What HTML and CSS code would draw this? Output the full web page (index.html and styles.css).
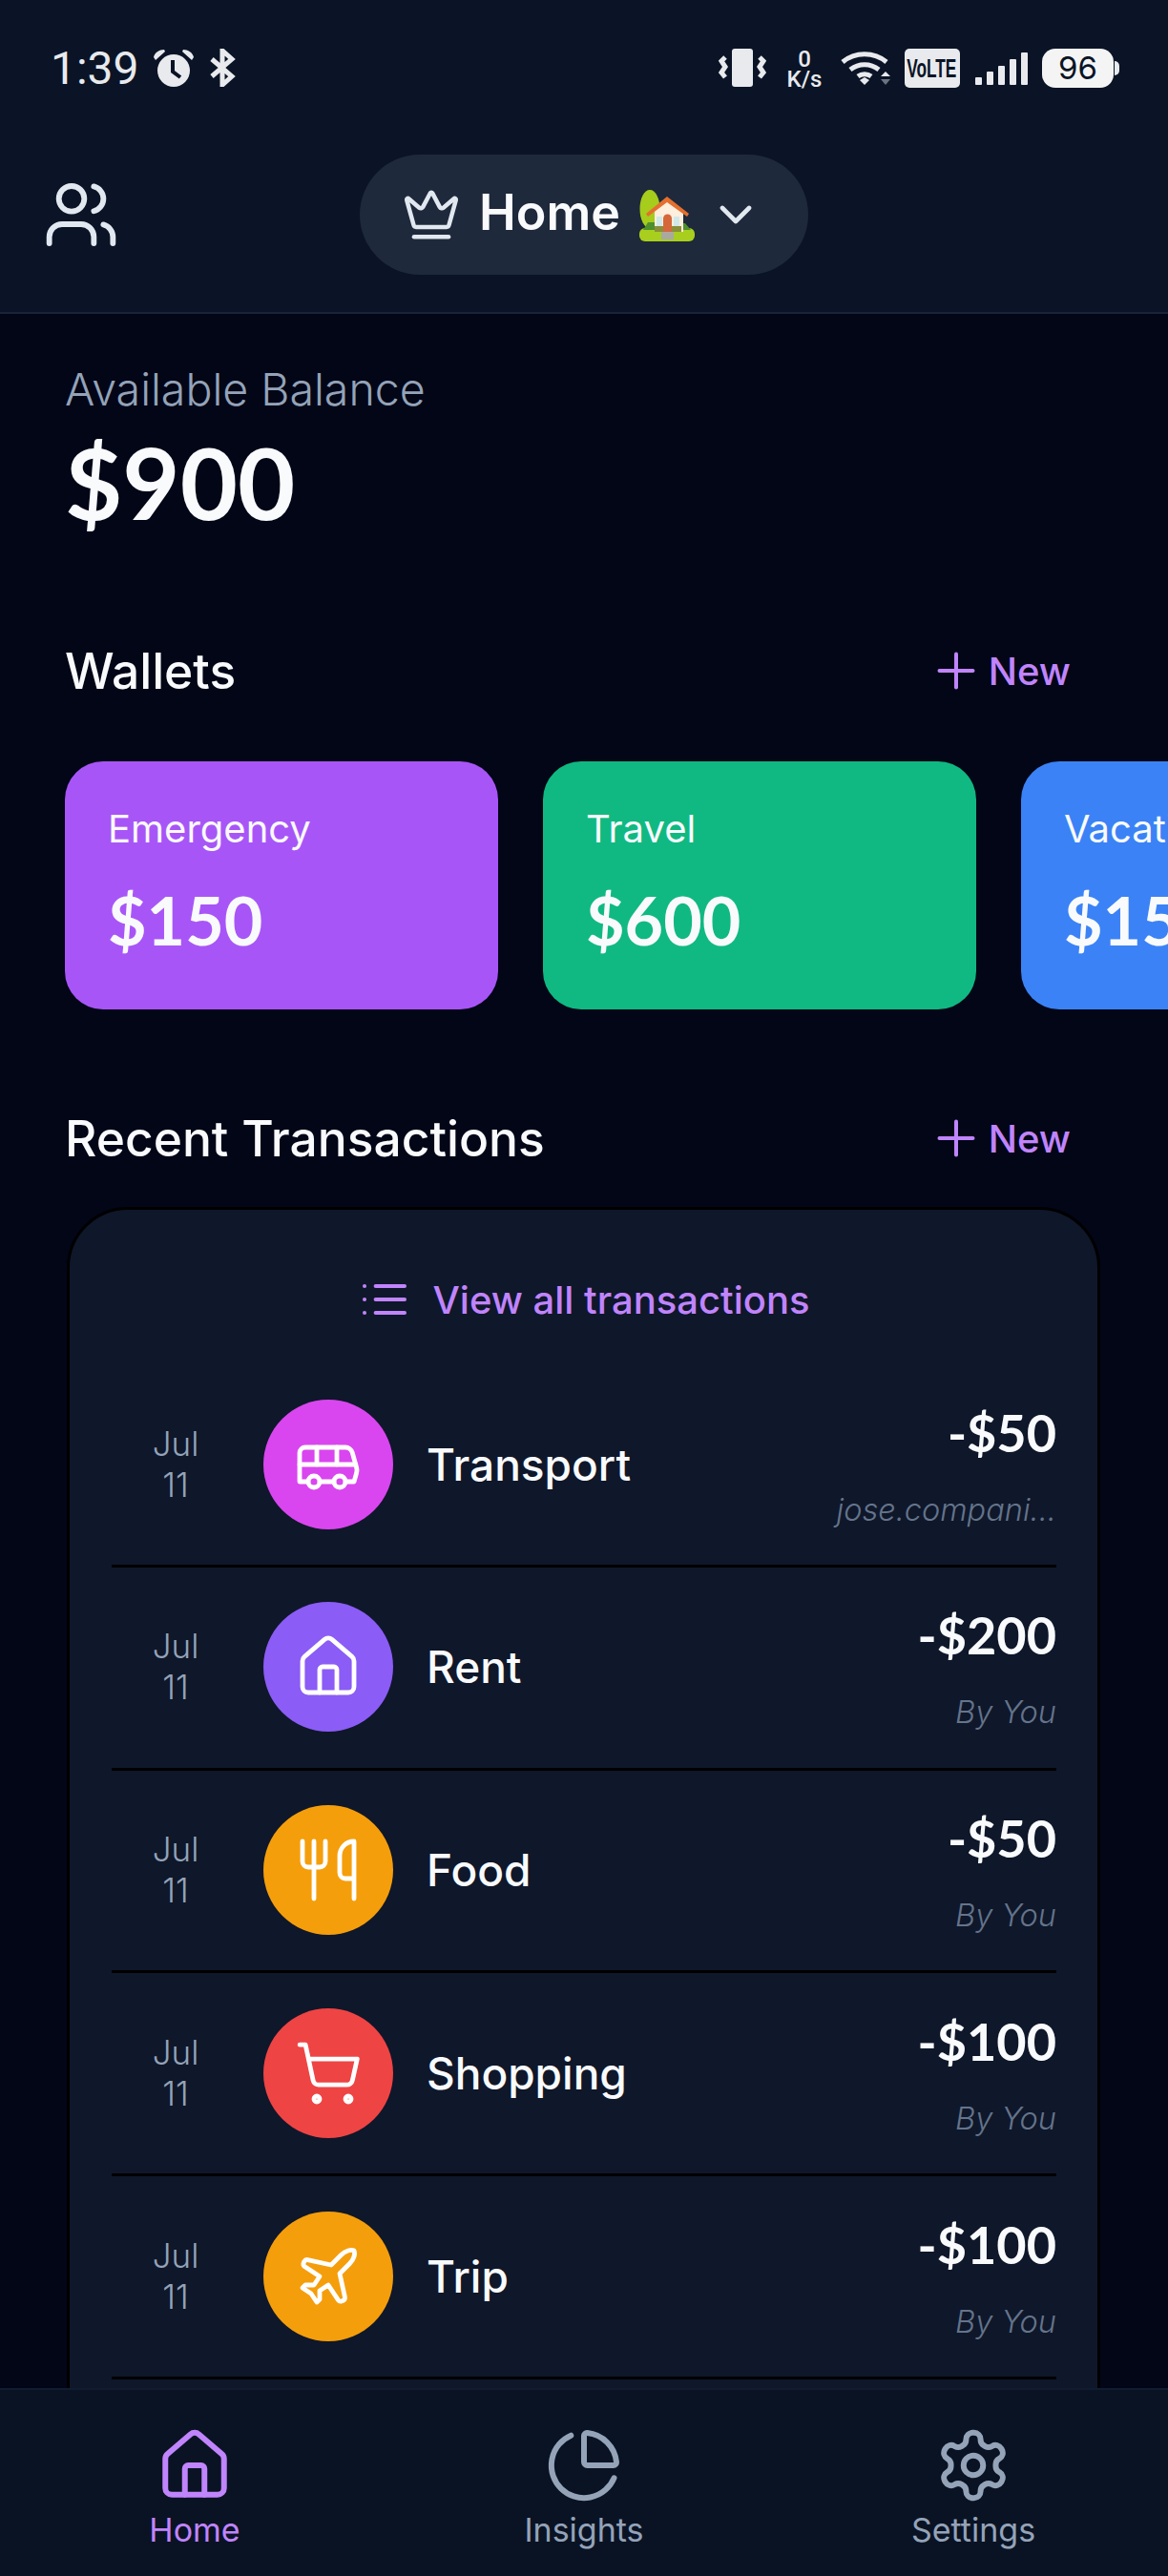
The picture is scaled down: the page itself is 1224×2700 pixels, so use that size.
FILE: index.html
```html
<!DOCTYPE html>
<html lang="en">

<head>
  <meta charset="UTF-8">
  <meta name="viewport" content="width=device-width, initial-scale=1.0">
  <title>Home | Wallets</title>
  <link rel="stylesheet" href="styles.css">
</head>

<body>
  <div class="app">
    <header class="topbar">
      <!--Phone status bar-->
      <div class="status">
        <div class="status-left">
          <span class="clock">1:39</span>
          <svg class="st-alarm" viewBox="0 0 44 40"><path class="fill" d="M22 6a17 17 0 1 0 0 34 17 17 0 0 0 0-34z"/><path class="fill" d="M1 9c1-5 6-8 11-8l1 2-10 9zM43 9c-1-5-6-8-11-8l-1 2 10 9z"/><path class="dark" d="M21 12v12l8 6"/></svg>
          <svg class="st-bt" viewBox="0 0 30 40"><path class="line" d="M4 11l21 18-10 9V2l10 9L4 29"/></svg>
        </div>
        <div class="status-right">
          <svg class="st-vib" viewBox="0 0 50 40"><rect class="fill" x="14" y="0" width="22" height="40" rx="3"/><path class="line" d="M7 9l-4 4 4 6-4 6 4 5M43 9l4 4-4 6 4 6-4 5"/></svg>
          <div class="netspeed"><span>0</span><span>K/s</span></div>
          <svg class="st-wifi" viewBox="0 0 56 40"><path class="line" d="M3 14c13-11 33-11 46 0M11 22c9-7 21-7 30 0M19 29c4-3 10-3 14 0"/><path class="fill" d="M21 33l5-3 5 3-5 5z"/><path class="fill" d="M43 29l5-5 5 5z"/><path class="dim" d="M43 32h10l-5 6z"/></svg>
          <div class="volte"><span>VoLTE</span></div>
          <div class="bars"><i class="b1"></i><i class="b2"></i><i class="b3"></i><i class="b4"></i><i class="b5"></i></div>
          <div class="battery"><span class="battery-level">96</span><i class="battery-nub"></i></div>
        </div>
      </div>

      <div class="appbar">
        <svg class="ic ic-users" viewBox="0 0 24 24"><path d="M16 21v-2a4 4 0 0 0-4-4H6a4 4 0 0 0-4 4v2"/><circle cx="9" cy="7" r="4"/><path d="M22 21v-2a4 4 0 0 0-3-3.87"/><path d="M16 3.13a4 4 0 0 1 0 7.75"/></svg>
        <div class="pill">
          <svg class="ic ic-crown" viewBox="0 0 24 24"><path d="M11.562 3.266a.5.5 0 0 1 .876 0L15.39 8.87a1 1 0 0 0 1.516.294L21.183 5.5a.5.5 0 0 1 .798.519l-2.834 10.246a1 1 0 0 1-.956.734H5.81a1 1 0 0 1-.957-.734L2.02 6.02a.5.5 0 0 1 .798-.519l4.276 3.664a1 1 0 0 0 1.516-.294z"/><path d="M5 21h14"/></svg>
          <span class="pill-name">Home</span>
          <!--house with garden emoji-->
          <svg class="pill-emoji" viewBox="0 0 58 54">
            <ellipse cx="11" cy="20" rx="10.5" ry="20" fill="#a6cc1c"/>
            <rect x="0" y="40" width="58" height="14" rx="6" fill="#a8cf1e"/>
            <path d="M4 42l5-8h8v8zM54 42l-6-7h-8v7z" fill="#4f8f2c"/>
            <path d="M16 21L29 10l13 11 4 2v21H16z" fill="#fdeedd"/>
            <path d="M7 25L29 7l23 18-2 3L29 13 9 28z" fill="#e46f30"/>
            <path d="M25 44V30a4.5 4.5 0 0 1 9 0v14z" fill="#d5683a"/>
            <rect x="18" y="28" width="6" height="10" fill="#cfe8ea"/>
            <rect x="36" y="28" width="6" height="10" fill="#cfe8ea"/>
            <rect x="16" y="38" width="9" height="6" fill="#8a8f3a"/>
            <rect x="34" y="38" width="10" height="6" fill="#8a8f3a"/>
            <rect x="23" y="44" width="13" height="8" fill="#a9a99f"/>
          </svg>
          <svg class="ic ic-chevron" viewBox="0 0 24 24"><path d="m6 9 6 6 6-6"/></svg>
        </div>
        <div class="appbar-end"></div>
      </div>
    </header>

    <main class="content">
      <section class="balance">
        <p class="balance-label">Available Balance</p>
        <p class="balance-value">$900</p>
      </section>

      <section class="section-head head-wallets">
        <h2>Wallets</h2>
        <a class="new-link"><svg class="ic ic-plus" viewBox="0 0 24 24"><path d="M5 12h14"/><path d="M12 5v14"/></svg>New</a>
      </section>

      <section class="wallets">
        <div class="wallet wallet-purple"><span class="wallet-name">Emergency</span><span class="wallet-amount">$150</span></div>
        <div class="wallet wallet-green"><span class="wallet-name">Travel</span><span class="wallet-amount">$600</span></div>
        <div class="wallet wallet-blue"><span class="wallet-name">Vacation</span><span class="wallet-amount">$150</span></div>
      </section>

      <section class="section-head head-recent">
        <h2>Recent Transactions</h2>
        <a class="new-link"><svg class="ic ic-plus" viewBox="0 0 24 24"><path d="M5 12h14"/><path d="M12 5v14"/></svg>New</a>
      </section>

      <section class="tx-card">
        <a class="view-all"><svg class="ic ic-list" viewBox="0 0 24 24"><path d="M3 12h.01"/><path d="M3 18h.01"/><path d="M3 6h.01"/><path d="M8 12h13"/><path d="M8 18h13"/><path d="M8 6h13"/></svg>View all transactions</a>

        <div class="tx">
          <div class="tx-date"><span>Jul</span><span>11</span></div>
          <div class="tx-icon tx-pink"><svg class="ic" viewBox="0 0 24 24"><path d="M8 6v6"/><path d="M15 6v6"/><path d="M2 12h19.6"/><path d="M18 18h3s.5-1.7.8-2.8c.1-.4.2-.8.2-1.2 0-.4-.1-.8-.2-1.2l-1.4-5C20.1 6.8 19.1 6 18 6H4a2 2 0 0 0-2 2v10h3"/><circle cx="7" cy="18" r="2"/><path d="M9 18h5"/><circle cx="16" cy="18" r="2"/></svg></div>
          <span class="tx-name">Transport</span>
          <div class="tx-right"><span class="tx-amount">-$50</span><span class="tx-by">jose.compani...</span></div>
        </div>

        <div class="tx">
          <div class="tx-date"><span>Jul</span><span>11</span></div>
          <div class="tx-icon tx-violet"><svg class="ic" viewBox="0 0 24 24"><path d="M15 21v-8a1 1 0 0 0-1-1h-4a1 1 0 0 0-1 1v8"/><path d="M3 10a2 2 0 0 1 .709-1.528l7-5.999a2 2 0 0 1 2.582 0l7 5.999A2 2 0 0 1 21 10v9a2 2 0 0 1-2 2H5a2 2 0 0 1-2-2z"/></svg></div>
          <span class="tx-name">Rent</span>
          <div class="tx-right"><span class="tx-amount">-$200</span><span class="tx-by">By You</span></div>
        </div>

        <div class="tx">
          <div class="tx-date"><span>Jul</span><span>11</span></div>
          <div class="tx-icon tx-amber"><svg class="ic" viewBox="0 0 24 24"><path d="M3 2v7c0 1.1.9 2 2 2h4a2 2 0 0 0 2-2V2"/><path d="M7 2v20"/><path d="M21 15V2a5 5 0 0 0-5 5v6c0 1.1.9 2 2 2h3Zm0 0v7"/></svg></div>
          <span class="tx-name">Food</span>
          <div class="tx-right"><span class="tx-amount">-$50</span><span class="tx-by">By You</span></div>
        </div>

        <div class="tx">
          <div class="tx-date"><span>Jul</span><span>11</span></div>
          <div class="tx-icon tx-red"><svg class="ic" viewBox="0 0 24 24"><circle cx="8" cy="21" r="1"/><circle cx="19" cy="21" r="1"/><path d="M2.05 2.05h2l2.66 12.42a2 2 0 0 0 2 1.58h9.78a2 2 0 0 0 1.95-1.57l1.65-7.43H5.12"/></svg></div>
          <span class="tx-name">Shopping</span>
          <div class="tx-right"><span class="tx-amount">-$100</span><span class="tx-by">By You</span></div>
        </div>

        <div class="tx">
          <div class="tx-date"><span>Jul</span><span>11</span></div>
          <div class="tx-icon tx-amber"><svg class="ic" viewBox="0 0 24 24"><path d="M17.8 19.2 16 11l3.5-3.5C21 6 21.5 4 21 3c-1-.5-3 0-4.5 1.5L13 8 4.8 6.2c-.5-.1-.9.1-1.1.5l-.3.5c-.2.5-.1 1 .3 1.3L9 12l-2 3H4l-1 1 3 2 2 3 1-1v-3l3-2 3.5 5.3c.3.4.8.5 1.3.3l.5-.2c.4-.3.6-.7.5-1.2z"/></svg></div>
          <span class="tx-name">Trip</span>
          <div class="tx-right"><span class="tx-amount">-$100</span><span class="tx-by">By You</span></div>
        </div>
      </section>
    </main>

    <nav class="tabs">
      <a class="tab tab-active">
        <svg class="ic" viewBox="0 0 24 24"><path d="M15 21v-8a1 1 0 0 0-1-1h-4a1 1 0 0 0-1 1v8"/><path d="M3 10a2 2 0 0 1 .709-1.528l7-5.999a2 2 0 0 1 2.582 0l7 5.999A2 2 0 0 1 21 10v9a2 2 0 0 1-2 2H5a2 2 0 0 1-2-2z"/></svg>
        <span>Home</span>
      </a>
      <a class="tab">
        <svg class="ic" viewBox="0 0 24 24"><path d="M21 12c.552 0 1.005-.449.95-.998a10 10 0 0 0-8.953-8.951c-.55-.055-.998.398-.998.95v8a1 1 0 0 0 1 1z"/><path d="M21.21 15.89A10 10 0 1 1 8 2.83"/></svg>
        <span>Insights</span>
      </a>
      <a class="tab">
        <svg class="ic" viewBox="0 0 24 24"><path d="M12.22 2h-.44a2 2 0 0 0-2 2v.18a2 2 0 0 1-1 1.73l-.43.25a2 2 0 0 1-2 0l-.15-.08a2 2 0 0 0-2.73.73l-.22.38a2 2 0 0 0 .73 2.73l.15.1a2 2 0 0 1 1 1.72v.51a2 2 0 0 1-1 1.74l-.15.09a2 2 0 0 0-.73 2.73l.22.38a2 2 0 0 0 2.73.73l.15-.08a2 2 0 0 1 2 0l.43.25a2 2 0 0 1 1 1.73V20a2 2 0 0 0 2 2h.44a2 2 0 0 0 2-2v-.18a2 2 0 0 1 1-1.73l.43-.25a2 2 0 0 1 2 0l.15.08a2 2 0 0 0 2.73-.73l.22-.39a2 2 0 0 0-.73-2.73l-.15-.08a2 2 0 0 1-1-1.74v-.5a2 2 0 0 1 1-1.74l.15-.09a2 2 0 0 0 .73-2.73l-.22-.38a2 2 0 0 0-2.73-.73l-.15.08a2 2 0 0 1-2 0l-.43-.25a2 2 0 0 1-1-1.73V4a2 2 0 0 0-2-2z"/><circle cx="12" cy="12" r="3"/></svg>
        <span>Settings</span>
      </a>
    </nav>
  </div>
</body>

</html>
```

FILE: styles.css
```css
* {
  box-sizing: border-box;
}

html,
body {
  height: 100%;
}

body {
  margin: 0;
  font-family: Inter, "Noto Sans", sans-serif;
  background-color: #020617;
  color: #f8fafc;
}

p,
h2 {
  margin: 0;
}

.app {
  height: 2700px;
  display: flex;
  flex-direction: column;
  overflow: hidden;
}

/* shared line icon */
.ic {
  fill: none;
  stroke: currentColor;
  stroke-width: 1.5;
  stroke-linecap: round;
  stroke-linejoin: round;
  flex: none;
  display: block;
}

/* top */
.topbar {
  flex: none;
  height: 329px;
  background-color: #0a1426;
  border-bottom: 2px solid #19233a;
}

.status {
  height: 142px;
  padding: 50px 51px 0 53px;
  display: flex;
  justify-content: space-between;
  align-items: flex-start;
  color: #e8eaed;
}

.status-left,
.status-right {
  display: flex;
  align-items: center;
  height: 42px;
}

.clock {
  font-family: Roboto, sans-serif;
  font-size: 48px;
  width: 107px;
}

.status .fill {
  fill: #e8eaed;
}

.status .dim {
  fill: #6b7280;
}

.status .line {
  fill: none;
  stroke: #e8eaed;
  stroke-width: 5;
}

.status .dark {
  fill: none;
  stroke: #0a1426;
  stroke-width: 4;
}

.st-alarm {
  width: 44px;
  height: 40px;
}

.st-bt {
  width: 30px;
  height: 40px;
  margin-left: 14px;
}

.st-vib {
  width: 50px;
  height: 40px;
}

.netspeed {
  display: flex;
  flex-direction: column;
  align-items: center;
  width: 43px;
  margin-left: 19px;
  padding-top: 4px;
  font-family: Roboto, sans-serif;
  font-size: 24px;
  font-weight: 500;
  line-height: 21px;
}

.st-wifi {
  width: 56px;
  height: 40px;
  margin-left: 15px;
}

.volte {
  width: 58px;
  height: 41px;
  margin-left: 12px;
  border-radius: 5px;
  background-color: #e8eaed;
  color: #0a1426;
  font-family: "Liberation Sans", sans-serif;
  font-size: 24px;
  font-weight: 700;
  line-height: 41px;
  text-align: center;
}

.volte span {
  display: inline-block;
  transform: scale(0.72, 1.15);
  transform-origin: center;
  margin: 0 -10px;
}

.bars {
  display: flex;
  align-items: flex-end;
  gap: 4.5px;
  height: 36px;
  margin-left: 16px;
}

.bars i {
  width: 7.5px;
  background-color: #e8eaed;
  border-radius: 1px;
}

.b1 {
  height: 8px;
}

.b2 {
  height: 14px;
}

.b3 {
  height: 20px;
}

.b4 {
  height: 27px;
}

.b5 {
  height: 34px;
}

.battery {
  display: flex;
  align-items: center;
  margin-left: 15px;
}

.battery-level {
  width: 75px;
  height: 41px;
  border-radius: 14px;
  background-color: #f4f4f5;
  color: #0a1426;
  font-size: 33px;
  line-height: 41px;
  text-align: center;
}

.battery-nub {
  width: 5px;
  height: 15px;
  margin-left: 1px;
  background-color: #e8eaed;
  border-radius: 0 7px 7px 0;
}

.appbar {
  display: grid;
  grid-template-columns: 1fr auto 1fr;
  align-items: center;
  padding: 20px 48px 0;
}

.ic-users {
  width: 80px;
  height: 80px;
  color: #e2e8f0;
  stroke-width: 1.75;
  margin-left: -3px;
}

.pill {
  width: 470px;
  height: 126px;
  border-radius: 63px;
  background-color: #1e293b;
  display: flex;
  align-items: center;
  padding-left: 44px;
}

.ic-crown {
  width: 62px;
  height: 62px;
  color: #e2e8f0;
  stroke-width: 1.75;
  margin-right: 19px;
}

.pill-name {
  font-size: 52px;
  font-weight: 600;
  line-height: 60px;
  margin-top: -4px;
  color: #f8fafc;
}

.pill-emoji {
  width: 58px;
  height: 54px;
  margin-left: 20px;
  margin-top: 2px;
}

.ic-chevron {
  width: 56px;
  height: 56px;
  color: #e2e8f0;
  stroke-width: 2;
  margin-left: 15px;
}

/* scroll area */
.content {
  flex: 1;
  min-height: 0;
  overflow: hidden;
  padding: 0 71px 0 68px;
  display: flex;
  flex-direction: column;
}

.balance-label {
  margin-top: 51px;
  font-size: 46.5px;
  line-height: 56px;
  color: #94a3b8;
  font-weight: 300;
}

.balance-value {
  margin-top: 7px;
  font-family: Lato, sans-serif;
  font-size: 104px;
  line-height: 124px;
  font-weight: 700;
}

.section-head {
  display: flex;
  justify-content: space-between;
  align-items: center;
  padding-right: 31px;
}

.section-head h2 {
  font-size: 51.5px;
  line-height: 62px;
  font-weight: 500;
  color: #f8fafc;
}

.head-wallets {
  margin-top: 105px;
}

.head-recent {
  margin-top: 104px;
}

.new-link {
  display: flex;
  align-items: center;
  gap: 12px;
  color: #c084fc;
  font-size: 40px;
  font-weight: 500;
}

.ic-plus {
  width: 60px;
  height: 60px;
  margin-right: -8px;
  stroke-width: 1.6;
}

.wallets {
  display: flex;
  gap: 47px;
  margin-top: 64px;
  margin-right: -71px;
  overflow: hidden;
  flex: none;
}

.wallet {
  flex: none;
  width: 454px;
  height: 260px;
  border-radius: 40px;
  padding: 43px 45px;
  display: flex;
  flex-direction: column;
  color: #f8fafc;
}

.wallet-purple {
  background-color: #a855f7;
}

.wallet-green {
  background-color: #10b981;
}

.wallet-blue {
  background-color: #3b82f6;
}

.wallet-name {
  font-size: 40px;
  line-height: 56px;
}

.wallet-amount {
  margin-top: 25px;
  font-family: Lato, sans-serif;
  font-size: 70px;
  line-height: 84px;
  font-weight: 700;
}

.tx-card {
  flex: none;
  margin: 41px 0 0 2px;
  padding: 0 43px 120px 44px;
  background-color: #0f172a;
  border: 3px solid #000;
  border-radius: 64px;
}

.view-all {
  display: flex;
  justify-content: center;
  align-items: center;
  gap: 22px;
  height: 162px;
  padding-top: 26px;
  color: #c084fc;
  font-size: 40px;
  font-weight: 500;
}

.ic-list {
  width: 56px;
  height: 56px;
  stroke-width: 1.75;
}

.tx {
  display: flex;
  align-items: center;
  padding: 36.5px 0 37.25px;
  border-bottom: 3px solid #000;
}

.tx-date {
  width: 134px;
  margin-right: 25px;
  display: flex;
  flex-direction: column;
  align-items: center;
  font-size: 35px;
  line-height: 43px;
  color: #94a3b8;
  font-weight: 300;
}

.tx-icon {
  width: 136px;
  height: 136px;
  border-radius: 50%;
  display: flex;
  align-items: center;
  justify-content: center;
  color: #fff;
}

.tx-icon .ic {
  width: 72px;
  height: 72px;
  stroke-width: 1.6;
}

.tx-pink {
  background-color: #d946ef;
}

.tx-violet {
  background-color: #8b5cf6;
}

.tx-amber {
  background-color: #f59e0b;
}

.tx-red {
  background-color: #ef4444;
}

.tx-name {
  flex: 1;
  margin-left: 35px;
  font-size: 46px;
  font-weight: 500;
  color: #f8fafc;
}

.tx-right {
  display: flex;
  flex-direction: column;
  align-items: flex-end;
  margin-top: 4px;
}

.tx-amount {
  font-family: Lato, sans-serif;
  font-size: 54px;
  line-height: 62px;
  font-weight: 700;
  color: #f8fafc;
}

.tx-by {
  margin-top: 30px;
  font-size: 32.5px;
  line-height: 40px;
  font-style: italic;
  font-weight: 300;
  color: #64748b;
}

/* bottom tabs */
.tabs {
  flex: none;
  height: 197px;
  background-color: #0a1324;
  border-top: 2px solid #111c30;
  display: grid;
  grid-template-columns: repeat(3, 1fr);
}

.tab {
  display: flex;
  flex-direction: column;
  align-items: center;
  padding-top: 38px;
  color: #94a3b8;
  font-size: 34px;
}

.tab .ic {
  width: 82px;
  height: 82px;
  stroke-width: 1.75;
}

.tab span {
  line-height: 46px;
  margin-top: 4px;
}

.tab-active {
  color: #c084fc;
}
```
